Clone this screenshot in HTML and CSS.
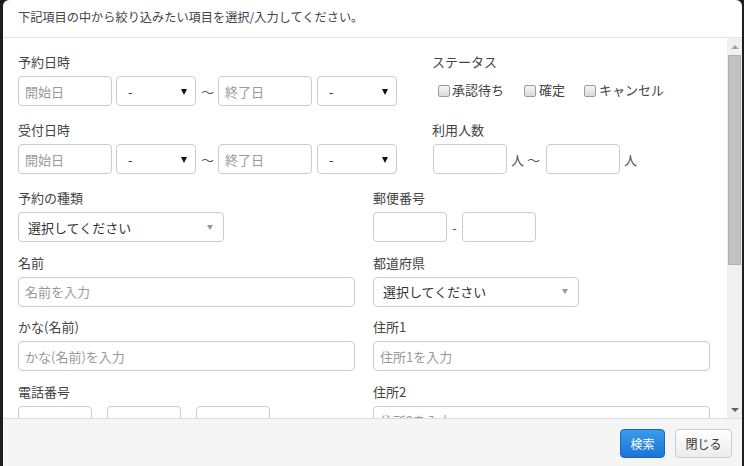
FILE: index.html
```html
<!DOCTYPE html>
<html lang="ja">
<head>
<meta charset="utf-8">
<title>検索条件</title>
<link rel="stylesheet" href="styles.css">
</head>
<body>
<div class="modal">
  <div class="modal-header">下記項目の中から絞り込みたい項目を選択/入力してください。</div>
  <div class="body-wrap">
    <div class="modal-body">
      <div class="row-wide">
        <div class="group">
          <div class="label">予約日時</div>
          <div class="controls">
            <input class="input w94" placeholder="開始日">
            <div class="select w80 ml4"><span>-</span><i class="caret-dark"></i></div>
            <span class="tilde ml5">〜</span>
            <input class="input w94 ml4" placeholder="終了日">
            <div class="select w80 ml5"><span>-</span><i class="caret-dark"></i></div>
          </div>
        </div>
        <div class="group">
          <div class="label">ステータス</div>
          <div class="controls checks">
            <label class="check"><input type="checkbox" class="cb"><span>承認待ち</span></label>
            <label class="check"><input type="checkbox" class="cb"><span>確定</span></label>
            <label class="check"><input type="checkbox" class="cb"><span>キャンセル</span></label>
          </div>
        </div>
        <div class="group">
          <div class="label">受付日時</div>
          <div class="controls">
            <input class="input w94" placeholder="開始日">
            <div class="select w80 ml4"><span>-</span><i class="caret-dark"></i></div>
            <span class="tilde ml5">〜</span>
            <input class="input w94 ml4" placeholder="終了日">
            <div class="select w80 ml5"><span>-</span><i class="caret-dark"></i></div>
          </div>
        </div>
        <div class="group">
          <div class="label">利用人数</div>
          <div class="controls">
            <input class="input w74 ml1">
            <span class="unit ml4">人</span>
            <span class="tilde ml3">〜</span>
            <input class="input w74 ml6">
            <span class="unit ml4">人</span>
          </div>
        </div>
      </div>
      <div class="row-cols">
        <div class="group">
          <div class="label">予約の種類</div>
          <div class="controls">
            <div class="select w206 light"><span>選択してください</span><i class="caret-light"></i></div>
          </div>
        </div>
        <div class="group">
          <div class="label">郵便番号</div>
          <div class="controls">
            <input class="input w74">
            <span class="sep">-</span>
            <input class="input w74">
          </div>
        </div>
        <div class="group">
          <div class="label">名前</div>
          <div class="controls">
            <input class="input wfull" placeholder="名前を入力">
          </div>
        </div>
        <div class="group">
          <div class="label">都道府県</div>
          <div class="controls">
            <div class="select w206 light"><span>選択してください</span><i class="caret-light"></i></div>
          </div>
        </div>
        <div class="group">
          <div class="label">かな(名前)</div>
          <div class="controls">
            <input class="input wfull" placeholder="かな(名前)を入力">
          </div>
        </div>
        <div class="group">
          <div class="label">住所1</div>
          <div class="controls">
            <input class="input wfull" placeholder="住所1を入力">
          </div>
        </div>
        <div class="group">
          <div class="label">電話番号</div>
          <div class="controls">
            <input class="input w74">
            <input class="input w74 ml15">
            <input class="input w74 ml15">
          </div>
        </div>
        <div class="group">
          <div class="label">住所2</div>
          <div class="controls">
            <input class="input wfull" placeholder="住所2を入力">
          </div>
        </div>
      </div>
    </div>
    <div class="scrollbar">
      <div class="sb-btn"><i class="sb-up"></i></div>
      <div class="sb-thumb"></div>
      <div class="sb-space"></div>
      <div class="sb-btn"><i class="sb-down"></i></div>
    </div>
  </div>
  <div class="modal-footer">
    <button class="btn btn-primary">検索</button>
    <button class="btn btn-default">閉じる</button>
  </div>
</div>
</body>
</html>
```

FILE: styles.css
```css
* { box-sizing: border-box; }

html, body {
  margin: 0;
  height: 100%;
  overflow: hidden;
}

body {
  background: #1e1e1e;
  font-family: "Noto Sans CJK JP", "Noto Sans", sans-serif;
  color: #444;
}

.modal {
  margin-left: 3px;
  width: 739px;
  height: 466px;
  background: #fff;
  border-radius: 6px 6px 0 0;
  overflow: hidden;
  display: flex;
  flex-direction: column;
}

.modal-header {
  height: 38px;
  flex: none;
  border-bottom: 1px solid #e5e5e5;
  padding: 9px 15px 0 15px;
  font-size: 12.2px;
  line-height: 17px;
  color: #444;
}

.body-wrap {
  height: 380px;
  flex: none;
  display: flex;
}

.modal-body {
  flex: 1;
  overflow: hidden;
  padding: 15px 0 0 15px;
}

.row-wide {
  display: grid;
  grid-template-columns: 414px 1fr;
  row-gap: 15px;
  margin-bottom: 15px;
}

.row-cols {
  display: grid;
  grid-template-columns: 337px 337px;
  column-gap: 18px;
  row-gap: 11.5px;
}

.label {
  height: 18px;
  line-height: 18px;
  font-size: 13px;
  margin-bottom: 5px;
  color: #444;
  white-space: nowrap;
}

.controls {
  height: 30px;
  display: flex;
  align-items: center;
  font-size: 13px;
  white-space: nowrap;
}

.input {
  height: 30px;
  border: 1px solid #ccc;
  border-radius: 4px;
  padding: 0 6px;
  font-family: inherit;
  font-size: 13px;
  color: #333;
  background: #fff;
  outline: none;
  flex: none;
}

.input::placeholder { color: #9a9a9a; }

.w94 { width: 94px; }
.w80 { width: 80px; }
.w74 { width: 74px; }
.w206 { width: 206px; }
.wfull { width: 337px; }

.ml1 { margin-left: 1px; }
.ml3 { margin-left: 3px; }
.ml4 { margin-left: 4px; }
.ml5 { margin-left: 5px; }
.ml6 { margin-left: 6px; }
.ml15 { margin-left: 15px; }

.select {
  height: 30px;
  border: 1px solid #ccc;
  border-radius: 4px;
  background: #fff;
  display: flex;
  align-items: center;
  justify-content: space-between;
  padding: 0 8px 0 11px;
  font-size: 13px;
  color: #333;
  flex: none;
}

.select.light {
  padding: 0 10px 0 9px;
}

.caret-dark {
  width: 0;
  height: 0;
  border-left: 3px solid transparent;
  border-right: 3px solid transparent;
  border-top: 6px solid #111;
  margin-top: 1px;
}

.caret-light {
  width: 0;
  height: 0;
  border-left: 3px solid transparent;
  border-right: 3px solid transparent;
  border-top: 5px solid #999;
}

.tilde, .unit {
  font-size: 13px;
  color: #555;
  width: 13px;
  text-align: center;
}

.sep {
  width: 15px;
  text-align: center;
  font-size: 13px;
  color: #555;
}

.checks {
  padding-left: 6px;
}

.check {
  display: flex;
  align-items: center;
  margin-right: 20px;
  font-size: 13px;
  line-height: 18px;
  color: #444;
}

.check span {
  display: block;
  height: 18px;
  line-height: 16px;
}

.check:nth-child(2) { margin-right: 19px; }

.cb {
  appearance: none;
  -webkit-appearance: none;
  width: 12px;
  height: 12px;
  margin: 0 2px 0 0;
  border: 1px solid #9d9d9d;
  border-radius: 2px;
  background: linear-gradient(#f6f6f6, #d9d9d9);
}

.check:nth-child(n+2) .cb { margin-right: 3px; }

.scrollbar {
  width: 15px;
  flex: none;
  background: #f0f0f0;
  display: flex;
  flex-direction: column;
  align-items: center;
}

.sb-btn {
  height: 17px;
  width: 15px;
  display: flex;
  align-items: center;
  justify-content: center;
}

.sb-up {
  width: 0;
  height: 0;
  border-left: 4px solid transparent;
  border-right: 4px solid transparent;
  border-bottom: 4px solid #a3a3a3;
}

.sb-down {
  width: 0;
  height: 0;
  border-left: 4px solid transparent;
  border-right: 4px solid transparent;
  border-top: 4px solid #606060;
}

.sb-thumb {
  width: 13px;
  height: 210px;
  background: #c1c1c1;
  border: 1px solid #b0b0b0;
}

.sb-space { flex: 1; }

.modal-footer {
  flex: 1;
  border-top: 1px solid #ddd;
  background: #f5f5f5;
  padding: 10px 10px 0 10px;
  display: flex;
  justify-content: flex-end;
  align-items: flex-start;
  gap: 10px;
}

.btn {
  height: 29px;
  padding: 0 9.5px;
  border-radius: 4px;
  font-family: inherit;
  font-size: 12px;
  line-height: 27px;
}

.btn-primary {
  color: #fff;
  border: 1px solid #1a67bd;
  background: linear-gradient(#3a9bec, #1b74d6);
}

.btn-default {
  color: #333;
  border: 1px solid #ccc;
  background: linear-gradient(#ffffff, #ececec);
}
```
